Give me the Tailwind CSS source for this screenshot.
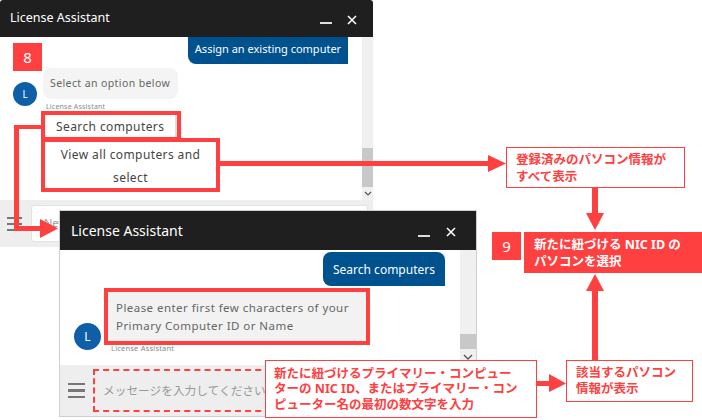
<!DOCTYPE html>
<html lang="ja">
<head>
    <meta charset="UTF-8">
    <title>License Assistant</title>
    <script src="https://cdn.jsdelivr.net/npm/@tailwindcss/browser@4"></script>
</head>
<body class="bg-white">
<div class="relative w-[702px] h-[420px] overflow-hidden bg-white font-['Noto_Sans','Noto_Sans_CJK_JP',sans-serif]">

    <!-- Back window -->
    <div class="absolute left-0 top-0 w-[373px] h-[247px] flex flex-col">
        <div class="h-[37px] shrink-0 bg-[#1f1f1f] rounded-t-[3px] flex items-center pl-[10px] pr-[16px] text-white">
            <span class="text-[12.500px] leading-none flex-1 -mt-[1px]">License Assistant</span>
            <span class="w-[12px] h-[2px] bg-[#ddd] mt-[9px] mr-[15px]"></span>
            <svg width="10" height="10" viewBox="0 0 10 10" class="mt-[2px]"><path d="M1 1l8 8M9 1l-8 8" stroke="#fff" stroke-width="1.6"/></svg>
        </div>
        <div class="flex flex-1 min-h-0">
            <div class="flex-1 relative">
                <div class="ml-auto mr-[14px] w-[160px] h-[27px] pb-[3px] bg-[#00528f] rounded-bl-[8px] text-white text-[11px] flex items-center justify-center">Assign an existing computer</div>
                <div class="absolute left-[43px] top-[31px] w-[135px] h-[31px] pt-[1px] bg-[#f4f4f4] rounded-[8px] text-[#666] text-[10.500px] tracking-[0.4px] flex items-center pl-[7px]">Select an option below</div>
                <div class="absolute left-[13px] top-[45px] w-[24px] h-[24px] rounded-full bg-[#0f5fa8] text-white text-[10px] flex items-center justify-center">L</div>
                <div class="absolute left-[46px] top-[65px] text-[7px] tracking-[0.2px] text-[#888]">License Assistant</div>
                <div class="absolute left-[41px] top-[74px] w-[140px] h-[30px] pt-[2px] border-[4px] border-[#ff4040] bg-white shadow-[inset_-2px_0_0_#dddddd] text-[#444] text-[12px] tracking-[0.4px] flex items-center pl-[11px]">Search computers</div>
                <div class="absolute left-[41px] top-[101px] w-[179px] h-[54px] pt-[2px] border-[4px] border-[#ff4040] bg-white text-[#444] text-[12px] tracking-[0.4px] leading-[23px] text-center flex items-center justify-center">View all computers and<br>select</div>
            </div>
            <div class="w-[11px] bg-[#f0f0f0] flex flex-col justify-end items-center">
                <div class="w-full h-[39px] bg-[#c8c8c8]"></div>
                <svg width="8" height="13" viewBox="0 0 8 13"><path d="M1 5l3 3 3-3" fill="none" stroke="#555" stroke-width="1.2"/></svg>
            </div>
        </div>
        <div class="h-[47px] shrink-0 bg-[#eeeeee] flex items-center pl-[7px] pr-[5px]">
            <div class="w-[15px] flex flex-col gap-[4px]">
                <span class="h-[2px] bg-[#777]"></span><span class="h-[2px] bg-[#777]"></span><span class="h-[2px] bg-[#777]"></span>
            </div>
            <div class="ml-[9px] flex-1 h-[37px] bg-white rounded-[3px] border border-[#e2e2e2] flex items-center pl-[12px] text-[11px] text-[#999]">New</div>
        </div>
    </div>

    <!-- Front window -->
    <div class="absolute left-[59px] top-[210px] w-[418px] h-[207px] flex flex-col bg-white border border-[#cfcfcf]">
        <div class="h-[39px] shrink-0 bg-[#1f1f1f] flex items-center pl-[11px] pr-[20px] text-white">
            <span class="text-[14px] leading-none flex-1">License Assistant</span>
            <span class="w-[12px] h-[2px] bg-[#ddd] mt-[11px] mr-[16px]"></span>
            <svg width="10" height="10" viewBox="0 0 10 10" class="mt-[2px]"><path d="M1 1l8 8M9 1l-8 8" stroke="#fff" stroke-width="1.6"/></svg>
        </div>
        <div class="flex flex-1 min-h-0">
            <div class="flex-1 relative">
                <div class="absolute left-[263px] top-[2px] w-[122px] h-[34px] pt-[1px] bg-[#00528f] rounded-tl-[8px] rounded-tr-[8px] rounded-bl-[8px] text-white text-[12px] flex items-center justify-center">Search computers</div>
                <div class="absolute left-[44px] top-[38px] w-[266px] h-[57px] border-[4px] border-[#ff4040] bg-[#f2f2f2] text-[#666] text-[11.500px] tracking-[0.45px] leading-[18px] flex items-center pl-[8px]"><span>Please enter first few characters of your<br>Primary Computer ID or Name</span></div>
                <div class="absolute left-[14px] top-[73px] w-[27px] h-[27px] rounded-full bg-[#0f5fa8] text-white text-[12px] flex items-center justify-center">L</div>
                <div class="absolute left-[51px] top-[93px] text-[7.500px] tracking-[0.2px] text-[#888]">License Assistant</div>
            </div>
            <div class="w-[16px] bg-[#f0f0f0] flex flex-col justify-end items-center">
                <div class="w-full h-[15px] bg-[#c8c8c8]"></div>
                <svg width="10" height="16" viewBox="0 0 10 16"><path d="M1 6l4 4 4-4" fill="none" stroke="#555" stroke-width="1.4"/></svg>
            </div>
        </div>
        <div class="h-[51px] shrink-0 bg-[#eeeeee] flex items-center pl-[8px]">
            <div class="w-[17px] flex flex-col gap-[4px]">
                <span class="h-[2.500px] bg-[#777]"></span><span class="h-[2.500px] bg-[#777]"></span><span class="h-[2.500px] bg-[#777]"></span>
            </div>
            <div class="ml-[8px] w-[300px] h-[43px] border-2 border-dashed border-[#ff4040] flex items-center pl-[8px] text-[11.700px] text-[#999] whitespace-nowrap">メッセージを入力してください</div>
        </div>
    </div>

    <!-- Connectors -->
    <svg class="absolute left-0 top-0" width="702" height="420" viewBox="0 0 702 420">
        <g fill="#ff4040">
            <rect x="14" y="125" width="29" height="4"/>
            <rect x="14" y="125" width="5" height="104"/>
            <rect x="14" y="226" width="28" height="5"/>
            <polygon points="40,219 58,228.500 40,238"/>
            <rect x="219" y="161" width="271" height="5"/>
            <polygon points="488,155 506,163.500 488,172"/>
            <rect x="592" y="187" width="6" height="27"/>
            <polygon points="586,213 604,213 595,230"/>
            <rect x="592" y="290" width="6" height="71"/>
            <polygon points="586,291 604,291 595,274"/>
            <rect x="536" y="381" width="15" height="5"/>
            <polygon points="549,374 566,383.500 549,392"/>
        </g>
    </svg>

    <!-- Step badges -->
    <div class="absolute left-[13px] top-[43px] w-[29px] h-[28px] bg-[#ff4040] text-white text-[15px] flex items-center justify-center">8</div>
    <div class="absolute left-[492px] top-[232px] w-[29px] h-[28px] bg-[#ff4040] text-white text-[15px] flex items-center justify-center">9</div>

    <!-- Callouts -->
    <div class="absolute left-[506px] top-[147px] w-[179px] h-[41px] border border-[#ff4040] bg-white text-[#ff4040] text-[12.500px] font-bold leading-[17px] pl-[9px] flex items-center">
        <span>登録済みのパソコン情報が<br>すべて表示</span>
    </div>
    <div class="absolute left-[524px] top-[232px] w-[178px] h-[41px] bg-[#ff4040] text-white text-[12.500px] font-bold leading-[17px] pl-[10px] flex items-center">
        <span>新たに紐づける NIC ID の<br>パソコンを選択</span>
    </div>
    <div class="absolute left-[566px] top-[360px] w-[127px] h-[42px] border border-[#ff4040] bg-white text-[#ff4040] text-[12.500px] font-bold leading-[16px] pl-[9px] flex items-center">
        <span>該当するパソコン<br>情報が表示</span>
    </div>
    <div class="absolute left-[265px] top-[360px] w-[272px] h-[58px] border border-[#ff4040] bg-white text-[#ff4040] text-[12.500px] font-bold leading-[15.500px] pl-[8px] flex items-center whitespace-nowrap">
        <span>新たに紐づけるプライマリー・コンピュー<br>ターの NIC ID、またはプライマリー・コン<br>ピューター名の最初の数文字を入力</span>
    </div>
</div>
</body>
</html>
